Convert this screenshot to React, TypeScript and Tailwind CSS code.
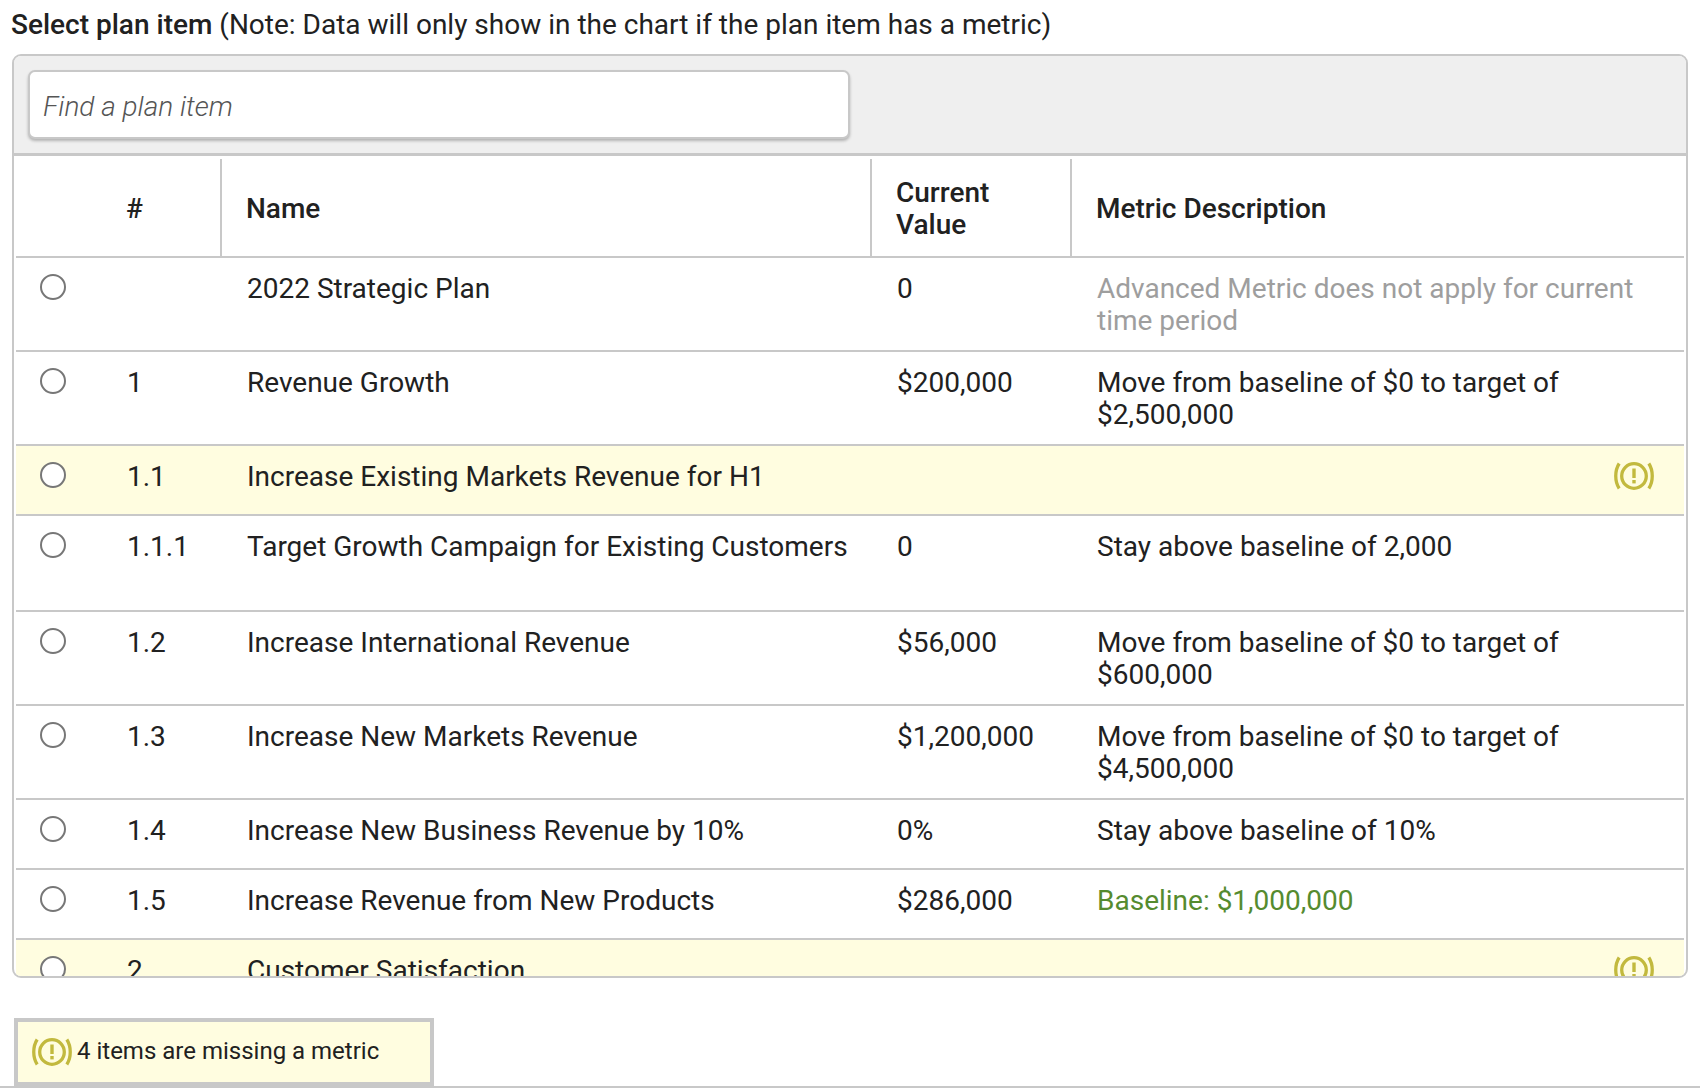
import React from "react";

const WarnIcon: React.FC<{ className?: string }> = ({ className }) => (
  <svg viewBox="0 0 40 28" className={className} fill="none">
    <circle cx="20" cy="14" r="12.3" stroke="#c2b93e" strokeWidth="3.3" />
    <rect x="18.3" y="6.5" width="3.4" height="9.5" fill="#c2b93e" />
    <rect x="18.3" y="18" width="3.4" height="3.4" fill="#c2b93e" />
    <path d="M5.2 1.5C0.6 8.5 0.6 19.5 5.2 26.5" stroke="#c2b93e" strokeWidth="3.3" />
    <path d="M34.8 1.5C39.4 8.5 39.4 19.5 34.8 26.5" stroke="#c2b93e" strokeWidth="3.3" />
  </svg>
);

interface Row {
  num: string;
  name: string;
  value?: string;
  metric?: string;
  metricClass?: string;
  height: string;
  warn?: boolean;
}

const rows: Row[] = [
  {
    num: "",
    name: "2022 Strategic Plan",
    value: "0",
    metric: "Advanced Metric does not apply for current time period",
    metricClass: "text-[#9e9e9e]",
    height: "h-[94px]",
  },
  {
    num: "1",
    name: "Revenue Growth",
    value: "$200,000",
    metric: "Move from baseline of $0 to target of $2,500,000",
    height: "h-[94px]",
  },
  { num: "1.1", name: "Increase Existing Markets Revenue for H1", height: "h-[70px]", warn: true },
  {
    num: "1.1.1",
    name: "Target Growth Campaign for Existing Customers",
    value: "0",
    metric: "Stay above baseline of 2,000",
    height: "h-[96px]",
  },
  {
    num: "1.2",
    name: "Increase International Revenue",
    value: "$56,000",
    metric: "Move from baseline of $0 to target of $600,000",
    height: "h-[94px]",
  },
  {
    num: "1.3",
    name: "Increase New Markets Revenue",
    value: "$1,200,000",
    metric: "Move from baseline of $0 to target of $4,500,000",
    height: "h-[94px]",
  },
  {
    num: "1.4",
    name: "Increase New Business Revenue by 10%",
    value: "0%",
    metric: "Stay above baseline of 10%",
    height: "h-[70px]",
  },
  {
    num: "1.5",
    name: "Increase Revenue from New Products",
    value: "$286,000",
    metric: "Baseline: $1,000,000",
    metricClass: "text-[#558b2f]",
    height: "h-[70px]",
  },
  { num: "2", name: "Customer Satisfaction", height: "h-[70px]", warn: true },
];

const gridCols = "grid grid-cols-[206px_650px_200px_1fr]";

export default function App() {
  return (
    <div className="h-[1088px] w-[1700px] overflow-hidden border-b-2 border-[#c8c8c8] bg-white font-['Roboto',sans-serif] text-[28px] leading-[32px] text-[#212121]">
      <div className="px-[11px] pt-[8px] leading-[34px]">
        <span className="font-medium">Select plan item</span> (Note: Data will only show in the chart if the plan item has a metric)
      </div>

      <div className="ml-[12px] mt-[12px] h-[924px] w-[1676px] overflow-hidden rounded-[9px] border-2 border-[#c8c8c8]">
        <div className="h-[100px] border-b-[3px] border-[#c8c8c8] bg-[#efefef] pl-[14px] pt-[14px]">
          <div className="flex h-[69px] w-[822px] items-center rounded-[7px] border-2 border-[#c8c8c8] bg-white pl-[13px] pt-[5px] font-light italic text-[#555555] shadow-[0_2px_3px_rgba(0,0,0,0.25)]">
            Find a plan item
          </div>
        </div>

        <div className={`${gridCols} mx-[2px] h-[102px] border-b-2 border-[#c8c8c8] pt-[3px] font-medium`}>
          <div className="flex items-center border-r-2 border-[#c8c8c8] pl-[110px] pt-[2px]">#</div>
          <div className="flex items-center border-r-2 border-[#c8c8c8] pl-[24px] pt-[2px]">Name</div>
          <div className="flex items-center border-r-2 border-[#c8c8c8] pl-[24px] pt-[2px]">
            Current<br />Value
          </div>
          <div className="flex items-center pl-[24px] pt-[2px]">Metric Description</div>
        </div>

        {rows.map((row) => (
          <div
            key={row.num + row.name}
            className={`${gridCols} ${row.height} mx-[2px] border-b-2 border-[#c8c8c8] pt-[15px] ${row.warn ? "bg-[#fffde0]" : ""}`}
          >
            <div className="flex">
              <span className="ml-[24px] mt-[1px] h-[26px] w-[26px] shrink-0 rounded-full border-2 border-[#777777] bg-white" />
              <span className="ml-[61px]">{row.num}</span>
            </div>
            <div className="pl-[25px]">{row.name}</div>
            <div className="pl-[25px]">{row.value}</div>
            <div className={`relative pl-[25px] pr-[40px] ${row.metricClass ?? ""}`}>
              {row.metric}
              {row.warn && <WarnIcon className="absolute right-[30px] top-[1px] h-[28px] w-[40px]" />}
            </div>
          </div>
        ))}
      </div>

      <div className="ml-[14px] mt-[40px] flex h-[68px] w-[420px] items-center border-4 border-[#c8c8c8] bg-[#fffde0] pl-[14px] text-[24px]">
        <WarnIcon className="h-[28px] w-[40px] shrink-0" />
        <span className="ml-[5px] -mt-[3px]">4 items are missing a metric</span>
      </div>
    </div>
  );
}
